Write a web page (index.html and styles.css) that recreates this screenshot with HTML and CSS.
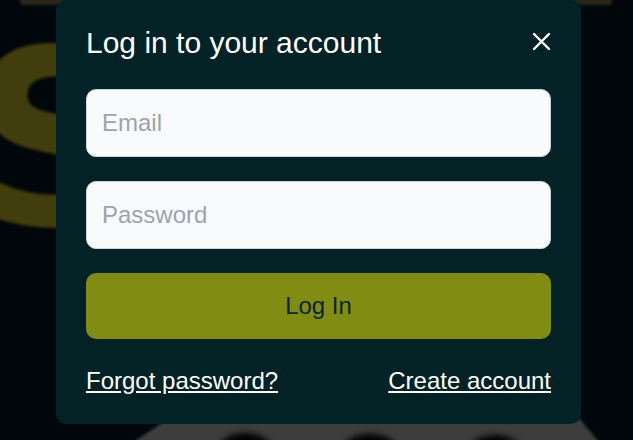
FILE: index.html
```html
<!DOCTYPE html>
<html lang="en">
<head>
<meta charset="utf-8">
<title>Log in</title>
<link rel="stylesheet" href="styles.css">
</head>
<body>
  <div class="backdrop" aria-hidden="true">
    <svg class="backdrop-art" width="633" height="440" viewBox="0 0 633 440" xmlns="http://www.w3.org/2000/svg">
      <defs>
        <filter id="soft" x="-20%" y="-20%" width="140%" height="140%"><feGaussianBlur stdDeviation="1.6"/></filter>
        <filter id="softer" x="-50%" y="-50%" width="200%" height="200%"><feGaussianBlur stdDeviation="3"/></filter>
      </defs>
      <rect x="20" y="-8" width="592" height="13" rx="3" fill="#29281a" filter="url(#soft)"/>
      <text x="-32" y="225" font-family="DejaVu Sans" font-weight="bold" font-size="245" fill="#423c0a" filter="url(#soft)">S</text>
      <polygon points="178,412 574,412 602,446 128,446" fill="#3d3d3d" filter="url(#soft)"/>
      <ellipse cx="245" cy="448" rx="26" ry="15" fill="#060606" filter="url(#softer)"/>
      <ellipse cx="370" cy="450" rx="28" ry="16" fill="#060606" filter="url(#softer)"/>
      <ellipse cx="495" cy="450" rx="26" ry="15" fill="#060606" filter="url(#softer)"/>
    </svg>
  </div>

  <main class="stage">
    <section class="modal" role="dialog" aria-labelledby="login-title">
      <header class="modal-header">
        <h2 id="login-title" class="modal-title">Log in to your account</h2>
        <button class="close-btn" type="button" aria-label="Close">
          <svg width="19" height="19" viewBox="0 0 19 19" xmlns="http://www.w3.org/2000/svg">
            <path d="M2 2 L17 17 M17 2 L2 17" stroke="#ffffff" stroke-width="2.4" stroke-linecap="round" fill="none"/>
          </svg>
        </button>
      </header>
      <form class="login-form">
        <input class="field" type="email" placeholder="Email">
        <input class="field" type="password" placeholder="Password">
        <button class="submit-btn" type="button">Log In</button>
      </form>
      <div class="modal-links">
        <a class="link" href="#">Forgot password?</a>
        <a class="link" href="#">Create account</a>
      </div>
    </section>
  </main>
</body>
</html>
```

FILE: styles.css
```css
* {
  box-sizing: border-box;
}

html, body {
  margin: 0;
  padding: 0;
  width: 633px;
  height: 440px;
  overflow: hidden;
  background: #00070a;
  font-family: "Liberation Sans", Arial, sans-serif;
}

.backdrop {
  position: absolute;
  inset: 0;
  background: #00070a;
}

.backdrop-art {
  display: block;
}

.stage {
  position: relative;
  display: flex;
  padding-left: 56px;
}

.modal {
  width: 525px;
  background: #022226;
  border-radius: 10px;
  padding: 25px 30px;
}

.modal-header {
  display: flex;
  align-items: center;
  justify-content: space-between;
  margin-bottom: 28px;
}

.modal-title {
  margin: 0;
  font-size: 30px;
  line-height: 36px;
  font-weight: 400;
  color: #ffffff;
}

.close-btn {
  display: flex;
  align-items: center;
  justify-content: center;
  width: 19px;
  height: 19px;
  padding: 0;
  margin-top: -4px;
  border: 0;
  background: none;
  cursor: pointer;
}

.login-form {
  display: flex;
  flex-direction: column;
  gap: 24px;
}

.field {
  display: block;
  width: 100%;
  height: 68px;
  padding: 0 15px;
  font-family: inherit;
  font-size: 24px;
  color: #111827;
  background: #f8fafc;
  border: 1px solid #cfd4da;
  border-radius: 10px;
  outline: none;
}

.field::placeholder {
  color: #9ca3af;
}

.submit-btn {
  display: block;
  width: 100%;
  height: 66px;
  border: 0;
  border-radius: 10px;
  background: #818c12;
  color: #0b2528;
  font-family: inherit;
  font-size: 24px;
  cursor: pointer;
}

.modal-links {
  display: flex;
  justify-content: space-between;
  margin-top: 24px;
  font-size: 24px;
  line-height: 36px;
}

.link {
  color: #ffffff;
  text-decoration: underline;
}
```
